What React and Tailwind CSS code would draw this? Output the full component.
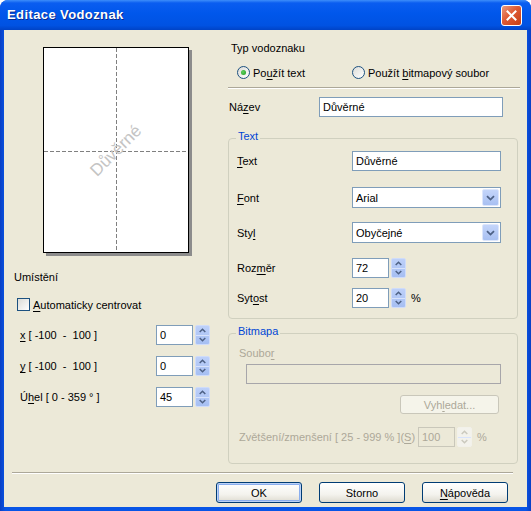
import React from "react";

function M({ t, i }) {
  return (
    <>
      {t.slice(0, i)}
      <span className="underline underline-offset-[2px] decoration-[1px]">{t[i]}</span>
      {t.slice(i + 1)}
    </>
  );
}

function Arrow({ up, color }) {
  return (
    <svg width="7" height="5" viewBox="0 0 7 5">
      <path
        d={up ? "M0.7 4L3.5 1.2L6.3 4" : "M0.7 1L3.5 3.8L6.3 1"}
        fill="none"
        stroke={color}
        strokeWidth="1.5"
      />
    </svg>
  );
}

function Spin({ disabled }) {
  const wrap = disabled
    ? "flex flex-col w-[15px] h-[20px] ml-[2px] rounded-[2px] bg-[#F3F2EC] border border-[#F2F1EA]"
    : "flex flex-col w-[15px] h-[20px] ml-[2px] rounded-[2px] bg-[linear-gradient(180deg,#BDD0F9,#A6BFF2)] border border-[#CFDCFA]";
  const c = disabled ? "#CBC9BD" : "#4D6185";
  return (
    <div className={wrap}>
      <div className="flex-1 flex items-center justify-center border-b border-[#D8E3FB]">
        <Arrow up color={c} />
      </div>
      <div className="flex-1 flex items-center justify-center">
        <Arrow color={c} />
      </div>
    </div>
  );
}

function Combo({ value }) {
  return (
    <div className="w-[149px] h-[21px] border border-[#7F9DB9] bg-white flex items-center">
      <span className="flex-1 pl-[3px] leading-[14px]">{value}</span>
      <div className="w-[17px] h-[17px] mr-[1px] rounded-[2px] border border-[#DCE6FC] bg-[linear-gradient(180deg,#C4D5FA,#A8C0F2)] flex items-center justify-center">
        <svg width="9" height="6" viewBox="0 0 9 6">
          <path d="M1 1.2L4.5 4.6L8 1.2" fill="none" stroke="#4D6185" strokeWidth="1.8" />
        </svg>
      </div>
    </div>
  );
}

function Radio({ checked }) {
  return (
    <div className="w-[13px] h-[13px] rounded-full border border-[#1C5180] bg-[linear-gradient(135deg,#DCDCD7,#FFFFFF)] flex items-center justify-center shrink-0">
      {checked && (
        <div className="w-[5px] h-[5px] rounded-full bg-[radial-gradient(circle_at_40%_40%,#5FD15F,#1E9A1E)]" />
      )}
    </div>
  );
}

function Button({ children, def, disabled, className }) {
  const base = disabled
    ? "h-[19px] rounded-[3px] border border-[#C9C7BA] bg-[#F5F4EA] text-[#ACA899] flex items-center justify-center"
    : def
    ? "h-[21px] rounded-[3px] border border-[#003C74] bg-[linear-gradient(180deg,#FFFFFF,#F4F3EE_60%,#DEDBD0)] shadow-[inset_0_0_0_1px_#BCD2F6,inset_0_0_0_2px_#8AAEEE] flex items-center justify-center"
    : "h-[21px] rounded-[3px] border border-[#003C74] bg-[linear-gradient(180deg,#FFFFFF,#F4F3EE_60%,#DEDBD0)] flex items-center justify-center";
  return <div className={`${base} ${className}`}>{children}</div>;
}

export default function App() {
  return (
    <div className="w-[531px] h-[511px] flex flex-col bg-[linear-gradient(90deg,#0A3FC4,#0855E6_1%,#0855E6_99%,#0A3FC4)] rounded-t-[8px] overflow-hidden font-['Liberation_Sans',Arial,sans-serif] text-[11px] leading-[14px] text-black">
      {/* Title bar */}
      <div className="h-[30px] shrink-0 flex items-center bg-[linear-gradient(180deg,#3D8EFA_0%,#0A5DF0_10%,#0057EB_45%,#0052E2_85%,#0043C6_100%)]">
        <span className="ml-[7px] text-white font-bold text-[13px] tracking-[0.4px] [text-shadow:1px_1px_0_#0A2A8C]">
          Editace Vodoznak
        </span>
        <div className="ml-auto mr-[9px] w-[21px] h-[21px] rounded-[3px] border border-white bg-[linear-gradient(135deg,#E99B80,#DF5A34_45%,#C43E14)] flex items-center justify-center">
          <svg width="11" height="11" viewBox="0 0 11 11">
            <path d="M1.5 1.5L9.5 9.5M9.5 1.5L1.5 9.5" stroke="white" strokeWidth="2" strokeLinecap="square" />
          </svg>
        </div>
      </div>

      {/* Body */}
      <div className="flex-1 mx-[4px] mb-[4px] bg-[#ECE9D8] flex flex-col">
        <div className="h-[442px] flex shrink-0">
          {/* Left column */}
          <div className="w-[224px] flex flex-col pt-[17px]">
            <div className="ml-[39px] w-[146px] h-[206px] relative border border-black bg-white shadow-[3px_3px_0_0_#8C8C8C] overflow-hidden">
              <svg className="absolute inset-0" width="144" height="204">
                <line x1="72.5" y1="0" x2="72.5" y2="204" stroke="#808080" strokeDasharray="4 2" />
                <line x1="0" y1="103.5" x2="144" y2="103.5" stroke="#808080" strokeDasharray="4 2" />
              </svg>
              <div className="absolute inset-0 flex items-center justify-center">
                <span className="text-[17px] leading-[18px] text-[#C4C4C4] -rotate-45 translate-y-[1px]">Důvěrné</span>
              </div>
            </div>

            <div className="mt-[17px] ml-[10px]">Umístění</div>

            <div className="mt-[14px] ml-[13px] h-[13px] flex items-center">
              <div className="w-[13px] h-[13px] border border-[#1C5180] bg-[linear-gradient(135deg,#DCDCD7,#FFFFFF)]" />
              <span className="ml-[3px]">
                <M t="Automaticky centrovat" i={0} />
              </span>
            </div>

            {[
              ["x [ -100  -  100 ]", 0, "0", "mt-[14px]"],
              ["y [ -100  -  100 ]", 0, "0", "mt-[11px]"],
              ["Úhel [ 0 - 359 ° ]", 1, "45", "mt-[11px]"],
            ].map(([t, i, v, mt]) => (
              <div key={t} className={`${mt} h-[20px] flex items-center`}>
                <span className="ml-[16px] w-[136px] whitespace-pre">
                  <M t={t} i={i} />
                </span>
                <div className="w-[37px] h-[20px] border border-[#7F9DB9] bg-white flex items-center pl-[3px]">
                  {v}
                </div>
                <Spin />
              </div>
            ))}
          </div>

          {/* Right column */}
          <div className="w-[295px] flex flex-col">
            <div className="mt-[11px] ml-[3px]">Typ vodoznaku</div>
            <div className="mt-[11px] h-[13px] flex items-center">
              <div className="ml-[9px] w-[115px] flex items-center">
                <Radio checked />
                <span className="ml-[3px]">
                  <M t="Použít text" i={2} />
                </span>
              </div>
              <div className="flex items-center">
                <Radio />
                <span className="ml-[3px]">
                  <M t="Použít bitmapový soubor" i={7} />
                </span>
              </div>
            </div>
            <div className="mt-[8px] w-[292px] border-t border-[#ACA899] border-b border-b-white" />

            <div className="mt-[8px] h-[20px] flex items-center">
              <span className="ml-[1px] w-[90px]">
                <M t="Název" i={2} />
              </span>
              <div className="w-[184px] h-[20px] border border-[#7F9DB9] bg-white flex items-center pl-[3px]">
                Důvěrné
              </div>
            </div>

            {/* Group Text */}
            <div className="mt-[21px] w-[290px] h-[181px] border border-[#D0D0BF] rounded-[4px] relative flex flex-col pt-[12px] pl-[8px]">
              <span className="absolute left-[7px] top-[-10px] px-[2px] bg-[#ECE9D8] text-[#0046D5]">Text</span>
              <div className="h-[20px] flex items-center">
                <span className="w-[115px]">
                  <M t="Text" i={0} />
                </span>
                <div className="w-[149px] h-[20px] border border-[#7F9DB9] bg-white flex items-center pl-[3px]">
                  Důvěrné
                </div>
              </div>
              <div className="mt-[16px] h-[21px] flex items-center">
                <span className="w-[115px]">
                  <M t="Font" i={0} />
                </span>
                <Combo value="Arial" />
              </div>
              <div className="mt-[14px] h-[21px] flex items-center">
                <span className="w-[115px]">
                  <M t="Styl" i={3} />
                </span>
                <Combo value="Obyčejné" />
              </div>
              <div className="mt-[15px] h-[20px] flex items-center">
                <span className="w-[115px]">
                  <M t="Rozměr" i={3} />
                </span>
                <div className="w-[37px] h-[20px] border border-[#7F9DB9] bg-white flex items-center pl-[3px]">72</div>
                <Spin />
              </div>
              <div className="mt-[10px] h-[20px] flex items-center">
                <span className="w-[115px]">
                  <M t="Sytost" i={3} />
                </span>
                <div className="w-[37px] h-[20px] border border-[#7F9DB9] bg-white flex items-center pl-[3px]">20</div>
                <Spin />
                <span className="ml-[5px]">%</span>
              </div>
            </div>

            {/* Group Bitmapa */}
            <div className="mt-[14px] w-[290px] h-[131px] border border-[#D0D0BF] rounded-[4px] relative flex flex-col pt-[12px] text-[#ACA899]">
              <span className="absolute left-[7px] top-[-10px] px-[2px] bg-[#ECE9D8] text-[#0046D5]">Bitmapa</span>
              <div className="ml-[10px]">
                <M t="Soubor" i={5} />
              </div>
              <div className="mt-[4px] ml-[17px] w-[255px] h-[20px] border border-[#A7A6AA] bg-[#ECE9D8]" />
              <div className="mt-[11px] flex justify-end pr-[18px]">
                <Button disabled className="w-[99px]">
                  <M t="Vyhledat..." i={3} />
                </Button>
              </div>
              <div className="mt-[13px] h-[20px] flex items-center">
                <span className="ml-[10px] w-[179px] whitespace-pre">
                  Zvětšení/zmenšení [ 25 - 999 % ](<span className="underline underline-offset-[2px]">S</span>)
                </span>
                <div className="w-[37px] h-[20px] border border-[#C9C7BA] bg-[#ECE9D8] flex items-center pl-[3px]">100</div>
                <Spin disabled />
                <span className="ml-[5px]">%</span>
              </div>
            </div>
          </div>
        </div>

        <div className="ml-[8px] w-[501px] border-t border-[#ACA899] border-b border-b-white" />

        <div className="mt-[8px] flex justify-end gap-[17px] pr-[19px]">
          <Button def className="w-[86px]">OK</Button>
          <Button className="w-[86px]">Storno</Button>
          <Button className="w-[86px]">
            <M t="Nápověda" i={0} />
          </Button>
        </div>
      </div>
    </div>
  );
}
